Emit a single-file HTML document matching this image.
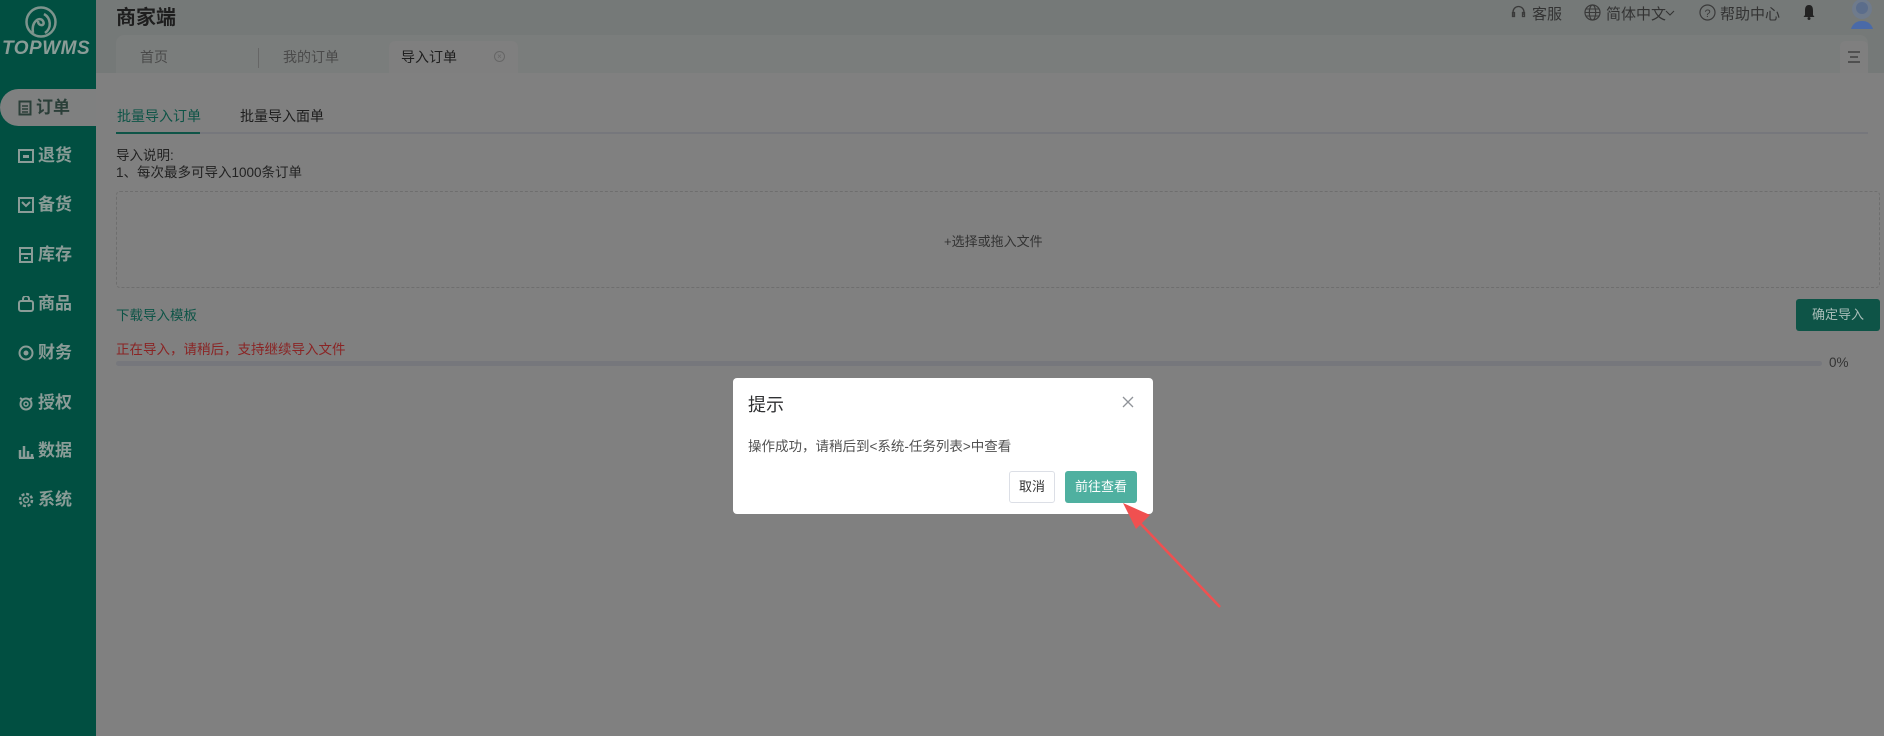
<!DOCTYPE html>
<html><head><meta charset="utf-8"><style>
*{margin:0;padding:0;box-sizing:border-box}
body{width:1884px;height:736px;overflow:hidden;background:#808080;font-family:"Liberation Sans","Noto Sans CJK SC",sans-serif;font-size:14px;color:#222;position:relative}
.abs{position:absolute;white-space:nowrap}
#side{left:0;top:0;width:96px;height:736px;background:#014f41}
.mi{position:absolute;left:0;width:96px;height:30px;color:#8a9c97;font-size:17px;font-weight:bold;line-height:30px;padding-left:18px}
.mi svg{vertical-align:-3px;margin-right:4px}
</style></head><body>
<div class="abs" id="side"></div>
<svg class="abs" style="left:24px;top:6px" width="34" height="32" viewBox="0 0 34 32"><circle cx="17" cy="16" r="14.5" fill="none" stroke="#7d948d" stroke-width="2.5"/><path d="M9 27 C7 15 16 10 19 15 C22 20 14 21 14 15 M21 27 C28 22 27 12 20 8" fill="none" stroke="#7d948d" stroke-width="2.5"/></svg>
<div class="abs" style="left:2px;top:38px;color:#8a9c97;font-size:19px;font-style:italic;font-weight:bold;letter-spacing:0.5px">TOPWMS</div>
<div class="abs" style="left:0;top:89px;width:96px;height:37px;background:#7f8080;border-radius:19px 0 0 19px"></div>
<div class="mi" style="top:93px;color:#2b3f39"><svg width="14" height="16"><rect x="1.5" y="1.5" width="11" height="13" fill="none" stroke="#2b3f39" stroke-width="2"/><path d="M4 6h6M4 9h6M4 12h6" stroke="#2b3f39" stroke-width="1.5"/></svg>订单</div>
<div class="mi" style="top:141px"><svg width="16" height="16"><rect x="1" y="2" width="14" height="12" fill="none" stroke="#8a9c97" stroke-width="2"/><rect x="5" y="7" width="6" height="3" fill="#8a9c97"/></svg>退货</div>
<div class="mi" style="top:190px"><svg width="16" height="16"><rect x="1" y="1" width="14" height="14" fill="none" stroke="#8a9c97" stroke-width="2"/><path d="M4 5l4 4 4-4" fill="none" stroke="#8a9c97" stroke-width="2"/></svg>备货</div>
<div class="mi" style="top:240px"><svg width="16" height="16"><path d="M2 1h12v6H2zM2 7v8h12V7" fill="none" stroke="#8a9c97" stroke-width="2"/><path d="M6 11h4" stroke="#8a9c97" stroke-width="2"/></svg>库存</div>
<div class="mi" style="top:289px"><svg width="16" height="16"><rect x="1" y="5" width="14" height="10" rx="2" fill="none" stroke="#8a9c97" stroke-width="2"/><path d="M5 5V3a3 3 0 016 0v2" fill="none" stroke="#8a9c97" stroke-width="2"/></svg>商品</div>
<div class="mi" style="top:338px"><svg width="16" height="16"><circle cx="8" cy="8" r="6.5" fill="none" stroke="#8a9c97" stroke-width="2"/><circle cx="8" cy="8" r="2.5" fill="#8a9c97"/></svg>财务</div>
<div class="mi" style="top:388px"><svg width="16" height="16"><circle cx="8" cy="9" r="5.5" fill="none" stroke="#8a9c97" stroke-width="2"/><circle cx="8" cy="9" r="2" fill="none" stroke="#8a9c97" stroke-width="1.5"/><path d="M2 3l3 2M14 3l-3 2" stroke="#8a9c97" stroke-width="2"/></svg>授权</div>
<div class="mi" style="top:436px"><svg width="16" height="16"><path d="M2 15V7M6 15V3M10 15V8M14 15V11M1 15h15" stroke="#8a9c97" stroke-width="2.5"/></svg>数据</div>
<div class="mi" style="top:485px"><svg width="16" height="16"><circle cx="8" cy="8" r="6" fill="none" stroke="#8a9c97" stroke-width="2.5" stroke-dasharray="3 1.7"/><circle cx="8" cy="8" r="2.5" fill="none" stroke="#8a9c97" stroke-width="1.5"/></svg>系统</div>

<div class="abs" style="left:96px;top:0;width:1788px;height:73px;background:#757978"></div>
<div class="abs" style="left:116px;top:35px;width:1752px;height:38px;background:#7a7d7c;border-radius:8px 8px 0 0"></div>
<div class="abs" style="left:116px;top:1px;font-size:20px;font-weight:bold;color:#1e1e1e">商家端</div>
<div class="abs" style="left:140px;top:47px;color:#4a4a4a">首页</div>
<div class="abs" style="left:258px;top:48px;width:1px;height:20px;background:#666"></div>
<div class="abs" style="left:283px;top:47px;color:#4a4a4a">我的订单</div>
<div class="abs" style="left:389px;top:41px;width:129px;height:32px;background:#7f7f7f;border-radius:6px 6px 0 0"></div>
<div class="abs" style="left:401px;top:47px;color:#1e1e1e">导入订单</div>
<div class="abs" style="left:494px;top:51px;width:11px;height:11px;border:1px solid #666;border-radius:50%;font-size:8px;line-height:9px;text-align:center;color:#666">×</div>
<div class="abs" style="left:1840px;top:41px;width:28px;height:32px;background:#7f7f7f;border-radius:5px 5px 0 0"></div>
<svg class="abs" style="left:1847px;top:51px" width="14" height="12"><path d="M1 1h12M3 6h8M1 11h12" stroke="#333" stroke-width="1.3"/></svg>

<svg class="abs" style="left:1510px;top:4px" width="17" height="17"><path d="M3 12V8a5.5 5.5 0 0111 0v3M2.5 8.5h2v4h-2zM12.5 8.5h2v4h-2z" fill="none" stroke="#3a3a3a" stroke-width="1.3"/></svg>
<div class="abs" style="left:1532px;top:3px;color:#333;font-size:15px">客服</div>
<svg class="abs" style="left:1584px;top:4px" width="17" height="17"><circle cx="8.5" cy="8.5" r="7.5" fill="none" stroke="#3a3a3a" stroke-width="1.2"/><ellipse cx="8.5" cy="8.5" rx="3.2" ry="7.5" fill="none" stroke="#3a3a3a" stroke-width="1.2"/><path d="M1 8.5h15M2 5h13M2 12h13" stroke="#3a3a3a" stroke-width="1"/></svg>
<div class="abs" style="left:1606px;top:3px;color:#333;font-size:15px">简体中文</div>
<svg class="abs" style="left:1665px;top:10px" width="10" height="6"><path d="M1 1l4 4 4-4" fill="none" stroke="#333" stroke-width="1"/></svg>
<svg class="abs" style="left:1699px;top:4px" width="17" height="17"><circle cx="8.5" cy="8.5" r="7.5" fill="none" stroke="#3a3a3a" stroke-width="1.2"/><text x="8.5" y="13" font-size="11" text-anchor="middle" fill="#3a3a3a" font-family="Liberation Sans">?</text></svg>
<div class="abs" style="left:1720px;top:3px;color:#333;font-size:15px">帮助中心</div>
<svg class="abs" style="left:1802px;top:4px" width="14" height="16"><path d="M7 1C3.5 1 3 4 3 7v4L1.5 13h11L11 11V7c0-3-.5-6-4-6z" fill="#222"/><circle cx="7" cy="14.5" r="1.5" fill="#222"/></svg>
<svg class="abs" style="left:1848px;top:0" width="28" height="30"><circle cx="14" cy="9" r="10" fill="#6f7b8c"/><circle cx="14" cy="8" r="6" fill="#5b6d8b"/><path d="M3 29c2-6 6-8 11-8s9 2 11 8z" fill="#4a6aa8"/></svg>

<div class="abs" style="left:117px;top:106px;color:#0e5447">批量导入订单</div>
<div class="abs" style="left:240px;top:106px;color:#1e1e1e">批量导入面单</div>
<div class="abs" style="left:116px;top:132px;width:1752px;height:2px;background:#76777c"></div>
<div class="abs" style="left:116px;top:132px;width:84px;height:2px;background:#0e5447"></div>
<div class="abs" style="left:116px;top:147px;color:#222;font-size:13.5px;line-height:17px">导入说明:<br>1、每次最多可导入1000条订单</div>
<div class="abs" style="left:116px;top:191px;width:1764px;height:97px;border:1px dashed #6e6e6e;border-radius:4px"></div>
<div class="abs" style="left:944px;top:231px;color:#333;font-size:13px">+选择或拖入文件</div>
<div class="abs" style="left:116px;top:304px;color:#0e5447;font-size:13.5px">下载导入模板</div>
<div class="abs" style="left:1796px;top:299px;width:84px;height:32px;background:#0e5447;border-radius:3px;color:#a9bdb8;font-size:13px;line-height:32px;text-align:center">确定导入</div>
<div class="abs" style="left:116px;top:338px;color:#8a2424;font-size:13.5px">正在导入，请稍后，支持继续导入文件</div>
<div class="abs" style="left:116px;top:361px;width:1706px;height:5px;background:#76777c;border-radius:3px"></div>
<div class="abs" style="left:1829px;top:355px;color:#333;font-size:13.5px">0%</div>

<div class="abs" style="left:733px;top:378px;width:420px;height:136px;background:#fff;border-radius:4px"></div>
<div class="abs" style="left:748px;top:391px;font-size:18px;color:#303133">提示</div>
<svg class="abs" style="left:1122px;top:396px" width="12" height="12"><path d="M1 1l10 10M11 1L1 11" stroke="#909399" stroke-width="1.3"/></svg>
<div class="abs" style="left:748px;top:435px;font-size:13.5px;color:#505050">操作成功，请稍后到&lt;系统-任务列表&gt;中查看</div>
<div class="abs" style="left:1009px;top:471px;width:46px;height:32px;border:1px solid #dcdfe6;border-radius:3px;font-size:13px;line-height:30px;text-align:center;color:#333">取消</div>
<div class="abs" style="left:1065px;top:471px;width:72px;height:32px;background:#4fb0a0;border-radius:3px;font-size:13px;line-height:32px;text-align:center;color:#fff">前往查看</div>
<svg class="abs" style="left:1100px;top:495px" width="130" height="120"><path d="M120 112 L38 26" stroke="#f05050" stroke-width="2.5"/><path d="M23 8 L50 20 L36 34 Z" fill="#f05050"/></svg>
</body></html>
